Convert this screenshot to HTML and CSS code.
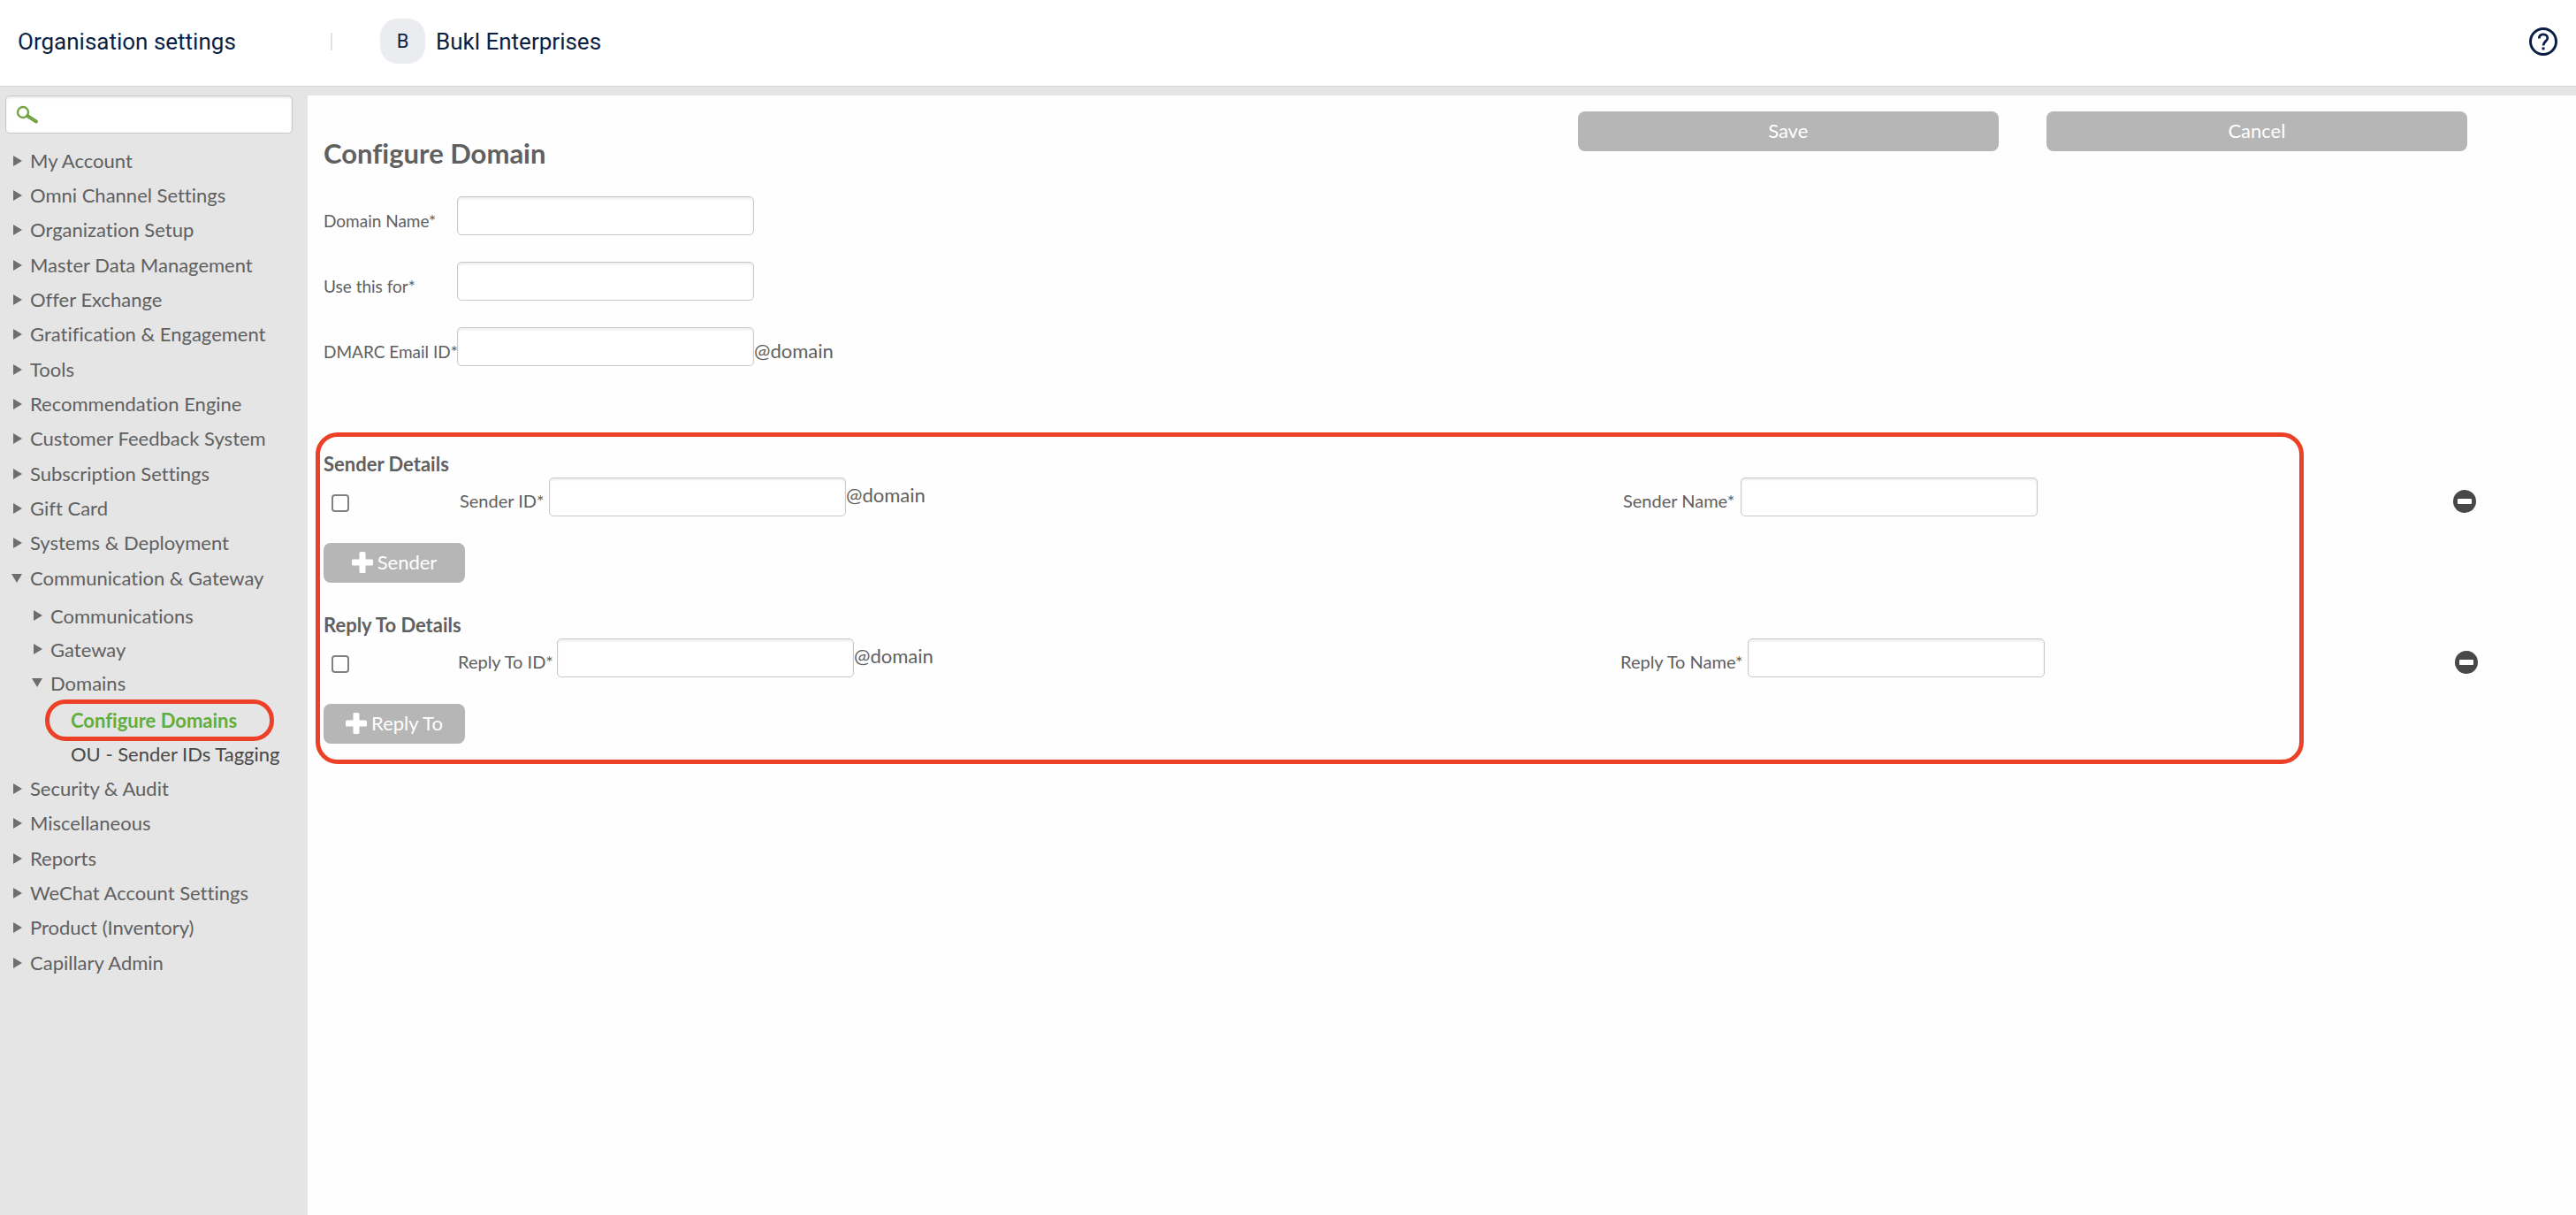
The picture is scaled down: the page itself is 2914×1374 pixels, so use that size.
FILE: index.html
```html
<!DOCTYPE html>
<html lang="en">
<head>
    <meta charset="UTF-8">
    <meta name="viewport" content="width=device-width, initial-scale=1.0">
    <title>Configure Domain</title>
    <link rel="stylesheet" href="styles.css">
</head>
<body>
    <header class="topbar">
        <div class="topbar-title">Organisation settings</div>
        <div class="org">
            <span class="org-badge">B</span>
            <span>Bukl Enterprises</span>
        </div>
        <a class="help" href="#" aria-label="Help">
            <svg width="32" height="32" viewBox="0 0 32 32" fill="none" stroke="#0b1f45">
                <circle cx="16" cy="16" r="14.5" stroke-width="3"/>
                <path d="M11.3 12.6C11.3 9.4 13.2 7.8 16 7.8s4.8 1.7 4.8 4.4c0 3.2-4.8 3.8-4.8 8.2" stroke-width="2.8"/>
                <path d="M16 22.4v3" stroke-width="3"/>
            </svg>
        </a>
    </header>

    <div class="layout">
        <nav class="sidebar">
            <div class="search">
                <svg class="search-icon" width="26" height="22" viewBox="0 0 26 22" fill="none" stroke="#74a444" stroke-linecap="round">
                    <circle cx="8" cy="8" r="6" stroke-width="2.4"/>
                    <path d="M13 12l10 6.500" stroke-width="4"/>
                </svg>
                <input type="text" aria-label="Search settings">
            </div>
            <ul class="menu">
                <li><a href="#">My Account</a></li>
                <li><a href="#">Omni Channel Settings</a></li>
                <li><a href="#">Organization Setup</a></li>
                <li><a href="#">Master Data Management</a></li>
                <li><a href="#">Offer Exchange</a></li>
                <li><a href="#">Gratification &amp; Engagement</a></li>
                <li><a href="#">Tools</a></li>
                <li><a href="#">Recommendation Engine</a></li>
                <li><a href="#">Customer Feedback System</a></li>
                <li><a href="#">Subscription Settings</a></li>
                <li><a href="#">Gift Card</a></li>
                <li><a href="#">Systems &amp; Deployment</a></li>
                <li><a class="open" href="#">Communication &amp; Gateway</a>
                    <ul class="submenu">
                        <li><a href="#">Communications</a></li>
                        <li><a href="#">Gateway</a></li>
                        <li><a class="open" href="#">Domains</a>
                            <ul class="pages">
                                <li class="current"><a href="#">Configure Domains</a></li>
                                <li><a href="#">OU - Sender IDs Tagging</a></li>
                            </ul>
                        </li>
                    </ul>
                </li>
                <li><a href="#">Security &amp; Audit</a></li>
                <li><a href="#">Miscellaneous</a></li>
                <li><a href="#">Reports</a></li>
                <li><a href="#">WeChat Account Settings</a></li>
                <li><a href="#">Product (Inventory)</a></li>
                <li><a href="#">Capillary Admin</a></li>
            </ul>
        </nav>

        <main class="content">
            <div class="page-head">
                <h1>Configure Domain</h1>
                <div class="actions">
                    <button class="btn" type="submit" form="domain-form">Save</button>
                    <button class="btn" type="button">Cancel</button>
                </div>
            </div>

            <form id="domain-form">
                <div class="form-row">
                    <label for="domain-name">Domain Name*</label>
                    <input id="domain-name" type="text">
                </div>
                <div class="form-row">
                    <label for="use-for">Use this for*</label>
                    <input id="use-for" type="text">
                </div>
                <div class="form-row">
                    <label for="dmarc">DMARC Email ID*</label>
                    <input id="dmarc" type="text">
                    <span class="suffix">@domain</span>
                </div>

                <div class="details">
                    <section class="sender">
                        <h2>Sender Details</h2>
                        <div class="detail-row">
                            <input type="checkbox" aria-label="Select sender">
                            <div class="field">
                                <label for="sender-id">Sender ID*</label>
                                <input id="sender-id" type="text">
                                <span class="suffix">@domain</span>
                            </div>
                            <div class="field field-name">
                                <label for="sender-name">Sender Name*</label>
                                <input id="sender-name" type="text">
                            </div>
                            <button class="remove" type="button" aria-label="Remove sender">
                                <svg width="26" height="26" viewBox="0 0 26 26">
                                    <circle cx="13" cy="13" r="13" fill="#484848"/>
                                    <rect x="5" y="10" width="16" height="6" rx="1" fill="#fff"/>
                                </svg>
                            </button>
                        </div>
                        <button class="btn btn-add" type="button">
                            <svg width="24" height="24" viewBox="0 0 24 24" fill="#fff">
                                <rect x="8.500" y="0" width="7" height="24" rx="1.500"/>
                                <rect x="0" y="8.500" width="24" height="7" rx="1.500"/>
                            </svg>
                            Sender
                        </button>
                    </section>

                    <section class="reply">
                        <h2>Reply To Details</h2>
                        <div class="detail-row">
                            <input type="checkbox" aria-label="Select reply to">
                            <div class="field">
                                <label for="reply-id">Reply To ID*</label>
                                <input id="reply-id" type="text">
                                <span class="suffix">@domain</span>
                            </div>
                            <div class="field field-name">
                                <label for="reply-name">Reply To Name*</label>
                                <input id="reply-name" type="text">
                            </div>
                            <button class="remove" type="button" aria-label="Remove reply to">
                                <svg width="26" height="26" viewBox="0 0 26 26">
                                    <circle cx="13" cy="13" r="13" fill="#484848"/>
                                    <rect x="5" y="10" width="16" height="6" rx="1" fill="#fff"/>
                                </svg>
                            </button>
                        </div>
                        <button class="btn btn-add" type="button">
                            <svg width="24" height="24" viewBox="0 0 24 24" fill="#fff">
                                <rect x="8.500" y="0" width="7" height="24" rx="1.500"/>
                                <rect x="0" y="8.500" width="24" height="7" rx="1.500"/>
                            </svg>
                            Reply To
                        </button>
                    </section>
                </div>
            </form>
        </main>
    </div>
</body>
</html>
```
FILE: styles.css
```css
*, *::before, *::after { box-sizing: border-box; }
body { margin: 0; min-height: 100vh; display: flex; flex-direction: column; font-family: Lato, "Open Sans", sans-serif; font-size: 22px; font-variant-ligatures: none; color: #606060; background: #e5e5e5; }
h1, h2, ul { margin: 0; padding: 0; }
ul { list-style: none; }
a { color: inherit; text-decoration: none; }
input, button { font: inherit; }

/* top bar */
.topbar { display: flex; align-items: center; height: 98px; padding: 0 21px 4px 20px; background: #fff; border-bottom: 1px solid #d6d6d6; font-family: Roboto, sans-serif; font-size: 26px; color: #0b1f45; }
.topbar-title { width: 354px; }
.org { display: flex; align-items: center; gap: 12px; }
.org::before { content: ""; width: 2px; height: 20px; margin-right: 42px; background: #dfe2e7; }
.org-badge { width: 51px; height: 51px; border-radius: 20px; background: #ebecf0; font-size: 22px; line-height: 51px; text-align: center; }
.help { display: flex; margin-left: auto; }

.layout { display: flex; flex: 1; padding-top: 10px; }

/* sidebar */
.sidebar { flex: none; width: 348px; }
.search { position: relative; width: 325px; margin-left: 6px; }
.search input { width: 100%; height: 43px; padding-left: 44px; }
.search-icon { position: absolute; left: 12px; top: 11px; }
input[type="text"] { display: block; border: 1px solid #c8c8c8; border-radius: 5px; background: #fff; box-shadow: inset 0 2px 3px rgba(0, 0, 0, 0.08); }
.menu { padding-top: 11px; }
.menu > li:nth-child(3n) { margin-bottom: 1px; }
.menu a { display: flex; align-items: center; height: 39px; padding-left: 15px; white-space: nowrap; }
.menu a::before { content: ""; width: 10px; margin-right: 9px; border: solid transparent; border-width: 6px 0 6px 10px; border-left-color: #6e6e6e; }
.menu a.open::before { width: 12px; margin: 0 9px 0 -2px; border-width: 10px 6px 0; border-color: #6e6e6e transparent transparent; }
.menu .submenu { padding: 4px 0 1px 23px; }
.menu .submenu a { height: 38px; }
.pages { padding-top: 4px; }
.menu .pages { margin-left: -23px; }
.menu .pages a { padding-left: 80px; color: #484848; }
.menu .pages a::before { display: none; }
.pages .current { position: relative; }
.menu .pages .current a { color: #62ae3c; font-weight: bold; }
.current::after { content: ""; position: absolute; left: 51px; top: -4px; width: 259px; height: 47px; border: 5px solid #ed4127; border-radius: 23px; pointer-events: none; }

/* page */
.content { flex: 1; padding: 18px 111px 40px 18px; background: #fefefe; }
.page-head { display: flex; justify-content: space-between; height: 96px; padding-right: 12px; }
.page-head h1 { padding-top: 27px; font-size: 31px; line-height: 40px; }
.actions { display: flex; gap: 54px; width: 41.5%; }
.btn { height: 45px; padding: 0 6px 2px; border: 0; border-radius: 8px; background: #b6b6b6; color: #fff; cursor: pointer; }
.actions .btn { flex: 1; }
.form-row { display: flex; height: 44px; margin-bottom: 30px; }
.form-row input, .field input { width: 336px; height: 44px; }
label { flex: none; font-size: 20px; white-space: nowrap; }
.form-row label { width: 151px; padding-top: 16px; font-size: 19px; }
.form-row .suffix { padding-top: 13px; }

/* sender and reply-to blocks */
.details { position: relative; padding-top: 66px; }
.details::after { content: ""; position: absolute; left: -9px; top: 45px; bottom: -23px; right: 197px; border: 5px solid #ed4127; border-radius: 25px; pointer-events: none; }
.details h2 { font-size: 22px; line-height: 30px; height: 30px; }
.detail-row { display: grid; grid-template-columns: 154px 1316fr 939fr 28px; height: 44px; }
.detail-row input[type="checkbox"] { appearance: none; width: 20px; height: 20px; margin: 19px 0 0 9px; border: 2px solid #808080; border-radius: 4px; background: #fff; }
.field { display: flex; }
.field label { width: 101px; padding-top: 14px; }
.field-name label { width: 133px; }
.reply .detail-row { grid-template-columns: 152px 1315fr 944fr 28px; margin-right: -2px; }
.reply .field label { width: 112px; }
.reply .field-name label { width: 144px; }
.field .suffix { padding-top: 6px; }
.remove { display: flex; padding: 14px 0 0; border: 0; background: none; cursor: pointer; }
.btn-add { display: flex; align-items: center; justify-content: center; gap: 5px; width: 160px; margin-top: 30px; }
.reply { margin-top: 33px; }
```
